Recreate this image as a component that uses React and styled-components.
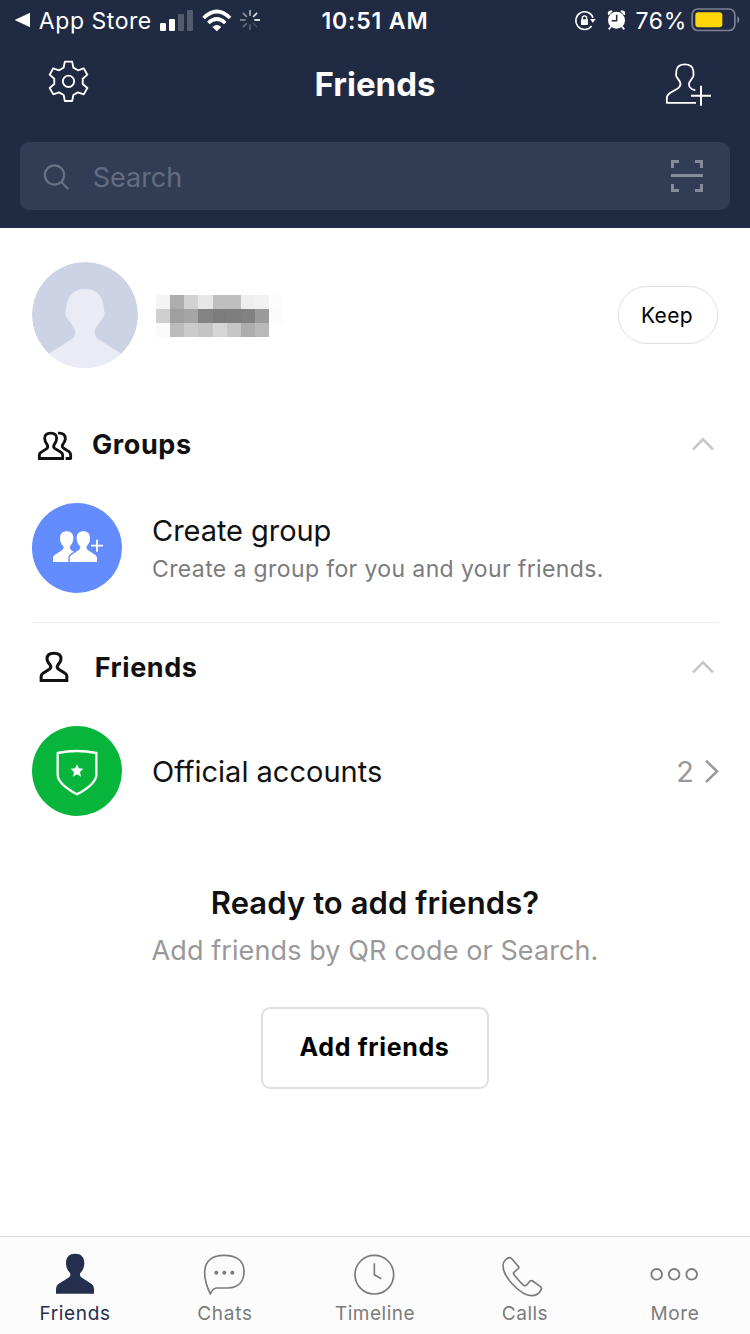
import React from "react";
import styled, { createGlobalStyle } from "styled-components";

const GlobalStyle = createGlobalStyle`
  *, *::before, *::after { box-sizing: border-box; }
  body { margin: 0; background: #fff; }
  button { font: inherit; padding: 0; cursor: pointer; }
  svg { display: block; flex: none; overflow: visible; }
`;

const Screen = styled.div`
  display: flex;
  flex-direction: column;
  width: 750px;
  height: 1334px;
  overflow: hidden;
  background: #fff;
  color: #111;
  font-family: Inter, "Liberation Sans", sans-serif;
`;

const Label = styled.span`
  margin: 0;
  font-size: ${(p) => p.$size}px;
  line-height: ${(p) => p.$line || p.$size + 8}px;
  font-weight: ${(p) => p.$weight || 400};
  letter-spacing: ${(p) => p.$track || 0}px;
  color: ${(p) => p.$color || "inherit"};
  white-space: nowrap;
`;

const Header = styled.header`
  height: 228px;
  background: #202a43;
  color: #fff;
`;

const StatusBar = styled.div`
  display: grid;
  grid-template-columns: 1fr auto 1fr;
  height: 40px;
  padding: 0 11px;
`;

const StatusGroup = styled.div`
  display: flex;
  align-items: center;
  justify-content: ${(p) => (p.$end ? "flex-end" : "flex-start")};
  height: 40px;
  margin-right: ${(p) => (p.$end ? -1 : 0)}px;

  ${Label} {
    padding-top: 2px;
  }
`;

const NavBar = styled.div`
  display: grid;
  grid-template-columns: 1fr auto 1fr;
  align-items: center;
  height: 88px;
  padding: 0 38px;
`;

const NavButton = styled.button`
  justify-self: ${(p) => (p.$end ? "end" : "start")};
  border: 0;
  background: none;
  color: inherit;
  padding: ${(p) => (p.$end ? "0" : "0 0 6px 10px")};
`;

const SearchBar = styled.div`
  display: flex;
  align-items: center;
  height: 68px;
  margin: 14px 20px 0;
  padding: 0 27px 0 24px;
  border-radius: 9px;
  background: #323c55;
`;

const SearchText = styled.div`
  flex: 1;
  display: flex;
  align-items: center;
  padding: 2px 0 0 23px;
`;

const Content = styled.main`
  flex: 1;
  padding: 34px 32px 0;
`;

const Profile = styled.section`
  display: flex;
  align-items: center;
  height: 106px;
`;

const HiddenName = styled.div`
  flex: 1;
  display: grid;
  grid-template-columns: 14px 14px 14px 15px 14px 14px 14px 14px 14px;
  grid-template-rows: repeat(3, 14px);
  margin: 2px 0 0 18px;
`;

const Pixel = styled.i`
  background: #${(p) => p.$shade};
`;

const KeepButton = styled.button`
  width: 100px;
  height: 58px;
  padding: 2px 2px 0 0;
  border: 1px solid #dfdfdf;
  border-radius: 29px;
  background: #fff;
  color: #000;
`;

const SectionHead = styled.div`
  display: flex;
  align-items: center;
  height: 60px;
  margin-top: ${(p) => p.$top}px;
  padding: 0 4px 0 ${(p) => p.$indent}px;
`;

const SectionTitle = styled.h2`
  flex: 1;
  display: flex;
  margin: 0 0 0 ${(p) => p.$gap}px;
  padding-top: 2px;
`;

const Row = styled.div`
  display: flex;
  align-items: center;
  height: 90px;
  margin-top: 29px;
`;

const Disc = styled.div`
  display: flex;
  align-items: center;
  justify-content: center;
  flex: none;
  width: 90px;
  height: 90px;
  border-radius: 50%;
  background: ${(p) => p.$color};
`;

const RowText = styled.div`
  flex: 1;
  display: flex;
  flex-direction: column;
  padding-left: 30px;
`;

const Divider = styled.hr`
  height: 1px;
  margin: 29px 0 0;
  border: 0;
  background: #ececec;
`;

const Invite = styled.section`
  display: flex;
  flex-direction: column;
  align-items: center;
  margin-top: 67px;
`;

const InviteHint = styled.p`
  display: flex;
  margin: 10px 0 0;
`;

const AddButton = styled.button`
  width: 228px;
  height: 82px;
  margin-top: 38px;
  padding: 0 1px 2px 0;
  border: 2px solid #dfdfdf;
  border-radius: 9px;
  background: #fff;
  color: #000;
`;

const TabBar = styled.nav`
  display: grid;
  grid-template-columns: repeat(5, 1fr);
  height: 98px;
  border-top: 1px solid #dadada;
  background: #fcfcfc;
`;

const Tab = styled.a`
  display: flex;
  flex-direction: column;
  align-items: center;
  color: ${(p) => (p.$active ? "#242f4e" : "#7b7b7b")};
`;

const TabIcon = styled.div`
  display: flex;
  align-items: center;
  height: 46px;
  margin: 14px 0 3px;
`;

const Gap = styled.span`
  flex: none;
  width: ${(p) => p.$w}px;
`;

/* Icons are drawn on a grid three times finer than their display size. */
function Icon({ box, children, stroke = "none", width = 6, fill = "none" }) {
  const [, , w, h] = box;
  return (
    <svg width={w / 3} height={h / 3} viewBox={box.join(" ")} fill={fill} stroke={stroke} strokeWidth={width} strokeLinejoin="round">
      {children}
    </svg>
  );
}

const toothPoints = [[-14.5, -41], [-11, -59], [11, -59], [14.5, -41]];
const gearPoints = [0, 60, 120, 180, 240, 300]
  .flatMap((deg) => {
    const a = (deg * Math.PI) / 180;
    return toothPoints.map(([x, y]) =>
      [x * Math.cos(a) - y * Math.sin(a), x * Math.sin(a) + y * Math.cos(a)].map((n) => n.toFixed(2)).join(",")
    );
  })
  .join(" ");

const Gear = () => (
  <Icon box={[-61.5, -64, 123, 126]} stroke="#fff" width={5.5}>
    <polygon points={gearPoints} />
    <circle r="17" />
  </Icon>
);

const AddPerson = () => (
  <Icon box={[315, 187, 141, 135]} stroke="#fff" width={5.5}>
    <path d="M408 309.500H320.500V296Q320.500 286 330 280L352 267Q363 260 361 250C359 240 348 235 348 225C350 220 348 218 349 213C351 200 361 194 374.500 194C388 194 398 200 400 213C401 218 399 220 401 225C401 235 389 242 387 252C386 263 391 268 406 272" />
    <path d="M423 258V318M393 288H453" strokeWidth="6" />
  </Icon>
);

const Signal = () => (
  <Icon box={[480, 24, 102, 69]} fill="#fff">
    <rect x="480" y="66" width="18" height="24" rx="4" />
    <rect x="507" y="54" width="18" height="36" rx="4" />
    <g opacity=".23">
      <rect x="534" y="39" width="18" height="51" rx="4" />
      <rect x="561" y="27" width="18" height="63" rx="4" />
    </g>
  </Icon>
);

const Wifi = () => (
  <Icon box={[605, 26, 90, 69]} stroke="#fff" width={11}>
    <path d="M610 53Q649.500 14 689 53M624 68Q649.500 44 675 68" />
    <path d="M636 80Q649.500 68 663 80L649.500 93Z" fill="#fff" stroke="none" />
  </Icon>
);

const Spinner = () => (
  <Icon box={[-30, -30, 60, 60]} stroke="#fff" width={5}>
    {[0.65, 0.85, 1, 0.15, 0.25, 0.3, 0.45, 0.5].map((o, i) => (
      <path key={i} d="M0 -13V-30" opacity={o} transform={`rotate(${i * 45})`} />
    ))}
  </Icon>
);

const RotationLock = () => (
  <Icon box={[42, 30, 66, 63]} stroke="#fff" width={4.5}>
    <path d="M99 53A26.500 26.500 0 1 0 95 78" />
    <path d="M90 57H107L98.500 68Z" fill="#fff" stroke="none" />
    <rect x="63" y="58" width="21" height="17" rx="2" fill="#fff" stroke="none" />
    <path d="M67 59V54A6.500 6.500 0 0 1 80 54V59" strokeWidth="4" />
  </Icon>
);

const Alarm = () => (
  <Icon box={[142, 29, 57, 63]} fill="#fff">
    <circle cx="170.500" cy="60" r="25.500" />
    <path d="M145 43Q142 31 155 30L159 33L147 45ZM196 43Q199 31 186 30L182 33L194 45Z" />
    <path d="M154 79L147 87M187 79L194 87" stroke="#fff" strokeWidth="5" />
    <path d="M171 43V61H156" stroke="#202a43" strokeWidth="4.5" fill="none" />
  </Icon>
);

const Battery = () => (
  <Icon box={[392, 23, 147, 72]}>
    <rect x="395.500" y="26" width="128" height="64.500" rx="17" stroke="#7c8292" strokeWidth="5" />
    <rect x="405" y="36" width="81" height="45" rx="9" fill="#ffd60a" />
    <path d="M531 47Q537 50 537 58Q537 66 531 69Z" fill="#7c8292" />
  </Icon>
);

const SearchIcon = () => (
  <Icon box={[71, 69, 77, 77]} stroke="#6a7286" width={6.5}>
    <circle cx="102.500" cy="105" r="29" />
    <path d="M123 126L144 147" />
  </Icon>
);

const ScanIcon = () => (
  <Icon box={[93, 60, 96, 96]} stroke="#858b99" width={9}>
    <path strokeLinejoin="miter" d="M97.500 84V64.500H117M165 64.500H184.500V84M97.500 132V151.500H117M165 151.500H184.500V132M93 106.500H189" />
  </Icon>
);

const Avatar = () => (
  <Icon box={[36, 36, 318, 318]}>
    <defs>
      <clipPath id="avatar"><circle cx="195" cy="195" r="159" /></clipPath>
    </defs>
    <g clipPath="url(#avatar)">
      <circle cx="195" cy="195" r="159" fill="#ccd3e5" />
      <path fill="#e9ecf5" d="M88 310L156 267Q169 258 164 238C158 223 140 207 136 191C135 186 138 184 138 177C141 140 158 117 195 117C232 117 249 140 252 177C252 184 255 186 254 191C250 207 231 223 225 238Q221 257 234 267L302 310V360H88Z" />
    </g>
  </Icon>
);

const GroupsIcon = () => (
  <Icon box={[51, 30, 105, 87]} stroke="#111" width={8.5}>
    <path strokeLinejoin="miter" d="M58 115.500V105Q58 100 63 97L80 86Q85 82 82 75C76 68 74 62 74 55C74 45 81 39.500 92 39.500C103 39.500 110 45 110 55C110 62 108 68 102 75Q99 82 105 86L123 97Q128 100 128 105V115.500Z" />
    <path d="M114 39.500C129 38 137 45 136 57C135 65 131 70 128 74Q125 81 130 84L147 95Q152 99 152 104V115.500H137" />
  </Icon>
);

const FriendIcon = () => (
  <Icon box={[57, 34, 89, 95]} stroke="#111" width={9}>
    <path strokeLinejoin="miter" d="M63.500 122.500V109Q64 104 69 101L88 89Q95 84 91 77C84 69 81 63 81 57C81 46 89 40.500 102 40.500C115 40.500 123 46 123 57C123 63 120 69 113 77Q109 84 116 89L135 101Q140 104 140.500 109V122.500Z" />
  </Icon>
);

const bust = "M0 52V40Q0 34 6 30L28 16Q34 12 31 5C24 -2 21 -11 21 -21C21 -33 29 -40 41 -40C53 -40 61 -33 61 -21C61 -11 58 -2 51 5Q48 12 54 16L76 30Q82 34 82 40V52Z";

const CreateGroupIcon = () => (
  <Icon box={[96, 334, 153, 96]} fill="#fff">
    <path transform="translate(99 372)" d={bust} />
    <path transform="translate(149 372)" d={bust} stroke="#638dff" strokeWidth="8" paintOrder="stroke" />
    <path d="M231 357V393M213 375H249" stroke="#fff" strokeWidth="5.5" />
  </Icon>
);

const ShieldIcon = () => (
  <Icon box={[108, 324, 126, 141]} stroke="#fff" width={7}>
    <path d="M113 339Q171 327 229 339V404C229 430 193 451 171 463C149 451 113 430 113 404Z" />
    <path fill="#fff" stroke="none" d="M171 373L176.500 385L190 386.500L180 396L183 410L171 403L159 410L162 396L152 386.500L165.500 385Z" />
  </Icon>
);

const ChevronUp = () => (
  <Icon box={[277, 501, 66, 42]} stroke="#c6c6c6" width={8}>
    <path strokeLinejoin="miter" d="M280 538L310 508L340 538" />
  </Icon>
);

const ChevronRight = () => (
  <Icon box={[189, 357, 45, 72]} stroke="#999" width={7.5}>
    <path strokeLinejoin="miter" d="M198 362L231 394L198 426" />
  </Icon>
);

const FriendsTabIcon = () => (
  <Icon box={[168, 69, 114, 126]} fill="#242f4e">
    <path d="M168 191V177Q168 167 175 162L205 143Q214 138 210 129C202 121 198 111 198 99C198 81 208 71 225.500 71C243 71 253 81 253 99C253 111 249 121 241 129Q237 138 246 143L275 162Q282 167 282 177V191Z" />
  </Icon>
);

const ChatsTabIcon = () => (
  <Icon box={[613, 66, 126, 130]} stroke="#7b7b7b" width={5}>
    <path d="M632 192C622 171 615 151 615 128C615 94 636 76 673 76C711 76 733 93 733 124C733 153 718 174 684 174H650Q638 176 632 192Z" />
    <g fill="#7b7b7b" stroke="none">
      <circle cx="650" cy="128" r="6" /><circle cx="674" cy="128" r="6" /><circle cx="698" cy="128" r="6" />
    </g>
  </Icon>
);

const TimelineTabIcon = () => (
  <Icon box={[74, 69, 122, 128]} stroke="#7b7b7b" width={5}>
    <circle cx="132" cy="134" r="58" />
    <path d="M132 100V134L153 146" />
  </Icon>
);

const CallsTabIcon = () => (
  <Icon box={[522, 65, 124, 130]} stroke="#7b7b7b" width={5}>
    <path d="M519 105C519 92 532 81 541 82Q544 83 546 86L565 108Q568 112 565 115L552 126Q549 129 552 133Q566 151 581 165Q586 168 590 164L600 152Q604 149 608 152L631 169Q636 173 634 177C628 191 617 196 604 196C575 196 519 143 519 105Z" />
  </Icon>
);

const MoreTabIcon = () => (
  <Icon box={[964, 66, 145, 130]} stroke="#7b7b7b" width={5.5}>
    <circle cx="981" cy="133" r="16" /><circle cx="1033.500" cy="133" r="16" /><circle cx="1086" cy="133" r="16" />
  </Icon>
);

const BackTriangle = () => (
  <Icon box={[45, 38, 46, 48]} fill="#fff"><path d="M44 62L90 40V84Z" /></Icon>
);

const nameShades = [
  "f4f4f4", "adadad", "d2d2d2", "e7e7e7", "bfbfbf", "bfbfbf", "eeeeee", "f2f2f2", "fcfcfc",
  "cfcfcf", "9f9f9f", "a5a5a5", "838383", "7c7c7c", "7e7e7e", "818181", "9b9b9b", "fbfbfb",
  "fafafa", "bcbcbc", "cbcbcb", "c4c4c4", "d6d6d6", "c6c6c6", "adadad", "b9b9b9", "ffffff",
];

const tabs = [
  { name: "Friends", icon: FriendsTabIcon, active: true, track: 0.65 },
  { name: "Chats", icon: ChatsTabIcon, track: 0.75 },
  { name: "Timeline", icon: TimelineTabIcon, track: 0.5 },
  { name: "Calls", icon: CallsTabIcon, track: 0.5 },
  { name: "More", icon: MoreTabIcon, track: 0.6 },
];

export default function App() {
  return (
    <Screen>
      <GlobalStyle />
      <Header>
        <StatusBar>
          <StatusGroup>
            <Gap $w={3.5} />
            <BackTriangle />
            <Gap $w={9} />
            <Label $size={23} $line={32} $track={0.55}>App Store</Label>
            <Gap $w={8} />
            <Signal />
            <Gap $w={8} />
            <Wifi />
            <Gap $w={8} />
            <Spinner />
          </StatusGroup>
          <StatusGroup>
            <Label $size={23} $line={32} $weight={600} $track={0.85}>10:51 AM</Label>
          </StatusGroup>
          <StatusGroup $end>
            <RotationLock />
            <Gap $w={11} />
            <Alarm />
            <Gap $w={9} />
            <Label $size={23} $line={32} $track={0.7}>76%</Label>
            <Gap $w={4} />
            <Battery />
          </StatusGroup>
        </StatusBar>
        <NavBar>
          <NavButton aria-label="Settings"><Gear /></NavButton>
          <Label as="h1" $size={33} $line={42} $weight={700}>Friends</Label>
          <NavButton $end aria-label="Add friend"><AddPerson /></NavButton>
        </NavBar>
        <SearchBar>
          <SearchIcon />
          <SearchText><Label $size={27} $color="#646c81">Search</Label></SearchText>
          <ScanIcon />
        </SearchBar>
      </Header>

      <Content>
        <Profile>
          <Avatar />
          <HiddenName>
            {nameShades.map((shade, i) => <Pixel key={i} $shade={shade} />)}
          </HiddenName>
          <KeepButton><Label $size={21} $line={30} $track={0.4}>Keep</Label></KeepButton>
        </Profile>

        <SectionHead $top={46} $indent={5}>
          <GroupsIcon />
          <SectionTitle $gap={20}><Label $size={27} $line={36} $weight={700} $track={0.6}>Groups</Label></SectionTitle>
          <ChevronUp />
        </SectionHead>
        <Row>
          <Disc $color="#638dff"><CreateGroupIcon /></Disc>
          <RowText>
            <Label $size={29} $line={42} $track={-0.05}>Create group</Label>
            <Label $size={23} $line={34} $track={0.38} $color="#7b7b7b">Create a group for you and your friends.</Label>
          </RowText>
        </Row>
        <Divider />

        <SectionHead $top={14} $indent={7}>
          <FriendIcon />
          <SectionTitle $gap={26}><Label $size={27} $line={36} $weight={700} $track={0.55}>Friends</Label></SectionTitle>
          <ChevronUp />
        </SectionHead>
        <Row>
          <Disc $color="#08b53b"><ShieldIcon /></Disc>
          <RowText><Label $size={29}>Official accounts</Label></RowText>
          <Label $size={29} $color="#999">2</Label>
          <Gap $w={9} />
          <ChevronRight />
        </Row>

        <Invite>
          <Label as="h2" $size={31} $line={40} $weight={600} $track={0.08}>Ready to add friends?</Label>
          <InviteHint><Label $size={27} $line={36} $track={0.1} $color="#999">Add friends by QR code or Search.</Label></InviteHint>
          <AddButton><Label $size={25} $line={34} $weight={700} $track={0.65}>Add friends</Label></AddButton>
        </Invite>
      </Content>

      <TabBar>
        {tabs.map(({ name, icon: TabGlyph, active, track }) => (
          <Tab key={name} $active={active}>
            <TabIcon><TabGlyph /></TabIcon>
            <Label $size={19} $line={28} $track={track}>{name}</Label>
          </Tab>
        ))}
      </TabBar>
    </Screen>
  );
}
